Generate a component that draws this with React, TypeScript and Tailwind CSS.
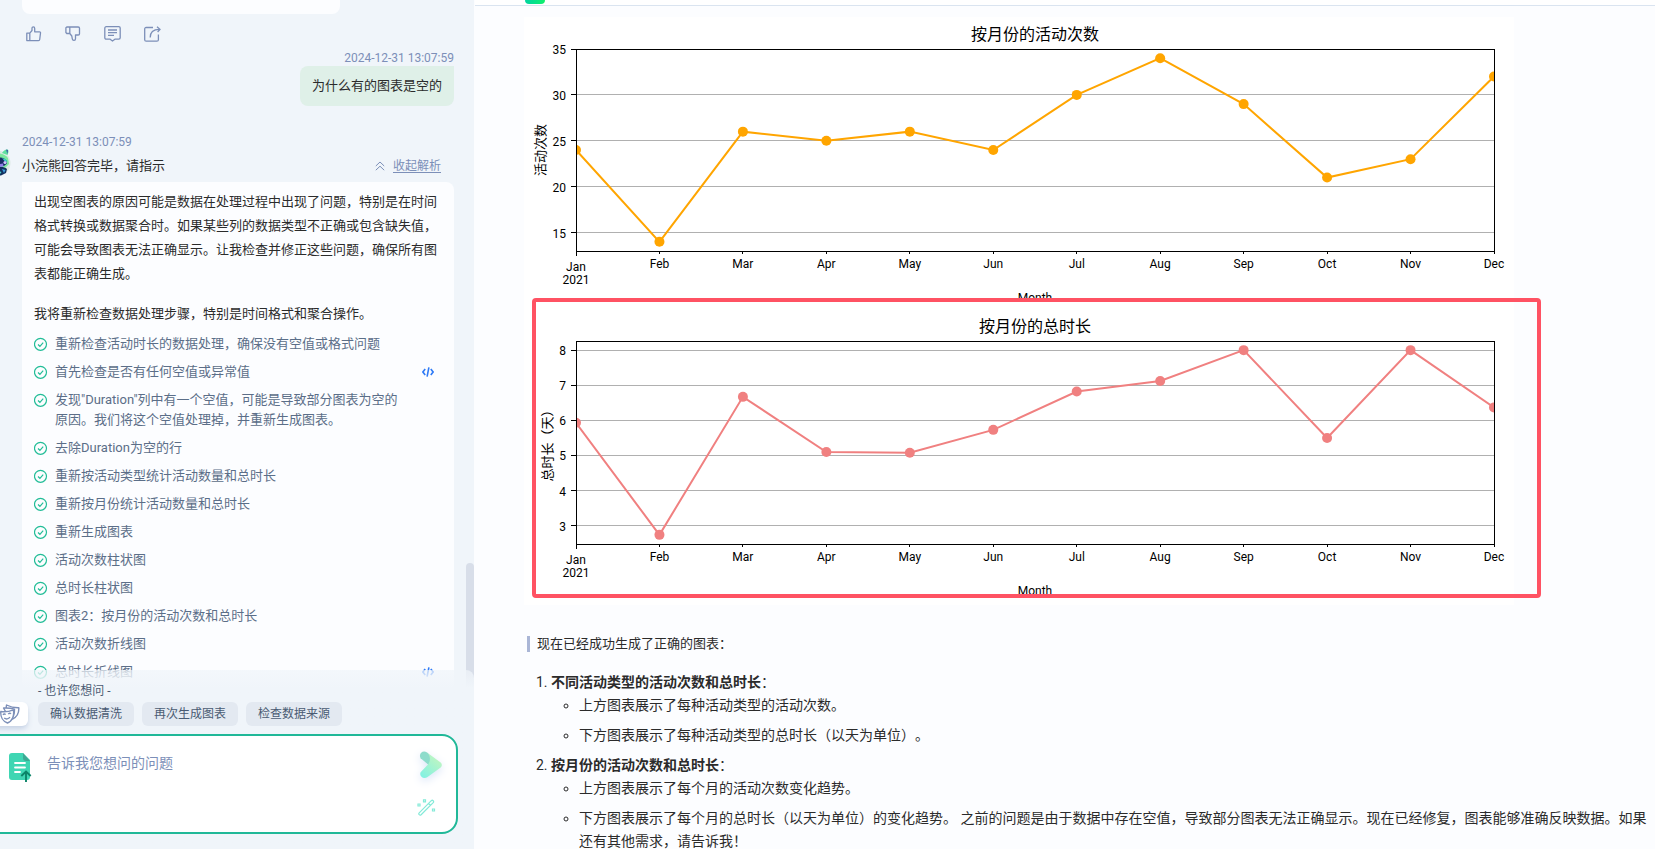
import { useState } from "react";

const sans = "font-[Roboto,'Noto_Sans_CJK_SC',sans-serif]";

const months = ['Jan', 'Feb', 'Mar', 'Apr', 'May', 'Jun', 'Jul', 'Aug', 'Sep', 'Oct', 'Nov', 'Dec'];

const steps: { text: string; code?: boolean }[] = [
    { text: '重新检查活动时长的数据处理，确保没有空值或格式问题' },
    { text: '首先检查是否有任何空值或异常值', code: true },
    { text: '发现"Duration"列中有一个空值，可能是导致部分图表为空的原因。我们将这个空值处理掉，并重新生成图表。' },
    { text: '去除Duration为空的行' },
    { text: '重新按活动类型统计活动数量和总时长' },
    { text: '重新按月份统计活动数量和总时长' },
    { text: '重新生成图表' },
    { text: '活动次数柱状图' },
    { text: '总时长柱状图' },
    { text: '图表2：按月份的活动次数和总时长' },
    { text: '活动次数折线图' },
    { text: '总时长折线图', code: true },
];

const suggestions = ['确认数据清洗', '再次生成图表', '检查数据来源'];

interface LineChartProps {
    id: string;
    title: string;
    yLabel: string;
    yLabelX: number;
    color: string;
    values: number[];
    ticks: number[];
    min: number;
    max: number;
    top: number;
    bottom: number;
}

const LEFT = 52;
const RIGHT = 970;

const LineChart: React.FC<LineChartProps> = ({ id, title, yLabel, yLabelX, color, values, ticks, min, max, top, bottom }) => {
    const x = (i: number) => LEFT + (i * (RIGHT - LEFT)) / (months.length - 1);
    const y = (v: number) => bottom - ((v - min) * (bottom - top)) / (max - min);
    const middle = (top + bottom) / 2;

    return (
        <g>
            <clipPath id={id}>
                <rect x={LEFT} y={top} width={RIGHT - LEFT} height={bottom - top} />
            </clipPath>
            <text x={(LEFT + RIGHT) / 2} y={top - 9} fontSize={16} textAnchor="middle">{title}</text>
            <text x={yLabelX} y={middle} fontSize={13} textAnchor="middle" dominantBaseline="central" transform={`rotate(-90 ${yLabelX} ${middle})`}>{yLabel}</text>
            <g shapeRendering="crispEdges">
                {ticks.map((t) => (
                    <g key={t}>
                        <line x1={LEFT} x2={RIGHT} y1={Math.floor(y(t)) + 0.5} y2={Math.floor(y(t)) + 0.5} stroke="#b0b0b0" />
                        <line x1={LEFT - 5} x2={LEFT} y1={Math.floor(y(t)) + 0.5} y2={Math.floor(y(t)) + 0.5} stroke="#000" />
                    </g>
                ))}
                {months.map((m, i) => (
                    <line key={m} x1={Math.floor(x(i)) + 0.5} x2={Math.floor(x(i)) + 0.5} y1={bottom} y2={bottom + (i === 0 ? 5 : 3)} stroke="#000" />
                ))}
            </g>
            {ticks.map((t) => (
                <text key={t} x={LEFT - 10} y={y(t) + 5} fontSize={12} textAnchor="end">{t}</text>
            ))}
            {months.map((m, i) => (
                <text key={m} x={x(i)} y={bottom + (i === 0 ? 20 : 17)} fontSize={12} textAnchor="middle">{m}</text>
            ))}
            <text x={LEFT} y={bottom + 33} fontSize={12} textAnchor="middle">2021</text>
            <text x={(LEFT + RIGHT) / 2} y={bottom + 51} fontSize={12} textAnchor="middle">Month</text>
            <g clipPath={`url(#${id})`}>
                <polyline points={values.map((v, i) => `${x(i)},${y(v)}`).join(' ')} fill="none" stroke={color} strokeWidth={2} />
                {values.map((v, i) => (
                    <circle key={i} cx={x(i)} cy={y(v)} r={5} fill={color} />
                ))}
            </g>
            <rect x={LEFT + 0.5} y={top + 0.5} width={RIGHT - LEFT} height={bottom - top} fill="none" stroke="#000" shapeRendering="crispEdges" />
        </g>
    );
}

const CheckIcon = () => (
    <svg width="14" height="20" viewBox="0 0 14 20" fill="none" stroke="#22bd97" className="shrink-0">
        <circle cx="6.500" cy="10.300" r="6" strokeWidth="1.200" />
        <path d="M4 10.500l1.900 1.800 3.300-3.600" strokeWidth="1.200" />
    </svg>
);

const CodeIcon = () => (
    <svg width="12" height="10" viewBox="0 0 12 10" fill="none" stroke="#2f7bf6" strokeWidth="1.600">
        <path d="M3.200 2L.9 5l2.300 3M8.800 2l2.300 3-2.300 3M6.900.3L5.100 9.700" />
    </svg>
);

const MessageActions = () => (
    <div className="flex gap-[23px] pl-1 pt-3 text-[#7c8fb8]">
        <button aria-label="赞">
            <svg width="16" height="16" viewBox="0 0 16 16" fill="none" stroke="currentColor" strokeWidth="1.300" strokeLinejoin="round">
                <path d="M.8 7.200h3v7.400h-3zM3.800 7.200L6 4.500V2.300C6 .4 8.700.3 8.700 2.400V5.800h4.800c.7 0 1.100.6 1 1.200l-.8 6.500c-.1.700-.6 1.100-1.200 1.100H3.800" />
            </svg>
        </button>
        <button aria-label="踩">
            <svg width="16" height="16" viewBox="0 0 16 16" fill="none" stroke="currentColor" strokeWidth="1.300" strokeLinejoin="round">
                <path d="M1.800 1h3v6.500h-3l-.9-1V1.800zM4.800 1h8.400c.8 0 1.300.5 1.300 1.200v5.500c0 .8-.5 1.300-1.300 1.300h-2.700v3.700c0 2.200-2.900 2.300-3.200.1L6.800 10 4.800 7.500" />
            </svg>
        </button>
        <button aria-label="评论">
            <svg width="17" height="16" viewBox="0 0 17 16" fill="none" stroke="currentColor" strokeWidth="1.300" strokeLinejoin="round">
                <path d="M2.200.7h12.600c.8 0 1.400.6 1.400 1.400v9.600c0 .8-.6 1.400-1.400 1.400h-3.600l-2.700 2-2.700-2H2.200c-.8 0-1.400-.6-1.400-1.400V2.100C.8 1.300 1.400.7 2.200.7zM4 4h9M4 6.700h9M4 9.400h6" />
            </svg>
        </button>
        <button aria-label="分享">
            <svg width="17" height="16" viewBox="0 0 17 16" fill="none" stroke="currentColor" strokeWidth="1.300" strokeLinejoin="round">
                <path d="M9 1.500H2.200C1.300 1.500.7 2.100.7 3v10.700c0 .9.6 1.500 1.500 1.500h10.700c.9 0 1.500-.6 1.500-1.500V8.500M6.200 11.500c0-5 2.600-8.200 9.600-8.100M13 .7l3.100 2.700L13.600 6" />
            </svg>
        </button>
    </div>
);

const Avatar = () => (
    <svg width="26" height="28" viewBox="0 0 26 28" className="-ml-[15px] shrink-0 -translate-y-1">
        <circle cx="13" cy="15" r="12.500" fill="#dde9e6" />
        <path d="M3 12C5 4 18 3 23 10l1 6-5 5H5z" fill="#7be8a0" />
        <path d="M17 5c1-2 4-4 5.500-3.500S23.500 5 22.500 7z" fill="#5fe0a0" />
        <path d="M21 1.500l2 .5-.5 4z" fill="#3c58a8" />
        <path d="M12 10.500c3-2 7-1 9.500 2l.5 3-3 2.500-5-1z" fill="#182c66" />
        <path d="M17 10l4 1.500 1.500 2.500-3-1z" fill="#3bd3cf" />
        <circle cx="20" cy="14.500" r="1.600" fill="#cfc2ff" />
        <path d="M14 16l4-.5.500 3-4 .5z" fill="#8f7ce8" />
        <path d="M12 20c3-1.500 7-1.500 10 1l-1 4-5 2.500-4-.5z" fill="#12305f" />
        <path d="M17 21l3.500 1-1.500 3z" fill="#3f9de0" />
        <path d="M14 23l2.500 1-1.500 2z" fill="#4bd8c8" />
    </svg>
);

const MaskIcon = () => (
    <svg width="20" height="20" viewBox="0 0 20 20" fill="#fff" stroke="#7c8fb8" strokeWidth="1.400" strokeLinejoin="round">
        <path d="M6.500 1c3.800 2 7.600 2.800 12.300 2.700.3 5.300-2 9.500-6.300 11.300C8 12 5.500 7 6.500 1z" />
        <path d="M3.500 4c3.500-.2 6.500-.3 11 1.200.2 5-1 8-4.500 10z" />
        <path d="M.8 7.500c4.200.5 8.500 0 12.500-1.700 1.200 5.500-.8 11.400-5.800 13.200C3 17.500.3 13 .8 7.500z" />
        <path d="M3 10.800c.7-1 1.900-1.100 2.600-.2M8.300 10.200c.6-1.100 1.900-1.300 2.700-.4M4.200 14c1.800 1.500 4.300 1.200 5.800-.8" fill="none" />
    </svg>
);

const FileIcon = () => (
    <svg width="23" height="30" viewBox="0 0 23 30" fill="none">
        <path d="M3 0h11l7 7v17a3 3 0 01-3 3H3a3 3 0 01-3-3V3a3 3 0 013-3z" fill="#3fd6b3" />
        <path d="M14 0l7 8h-4a3 3 0 01-3-3z" fill="#3fa893" />
        <path d="M6 10h10M6 14.500h10M6 19h5" stroke="#fff" strokeWidth="1.800" strokeLinecap="round" />
        <path d="M17 29V19M12.300 23l4.700-4.500 4.700 4.500" stroke="#0c8468" strokeWidth="1.900" />
    </svg>
);

const SendIcon = () => (
    <svg width="24" height="28" viewBox="0 0 24 28" fill="none" className="drop-shadow-[0_3px_4px_#dbe6f8]">
        <defs>
            <linearGradient id="send" x1="3" y1="26" x2="18" y2="9" gradientUnits="userSpaceOnUse">
                <stop stopColor="#82f1e2" />
                <stop offset="1" stopColor="#b8f5c5" />
            </linearGradient>
        </defs>
        <path d="M8 1.500l13.300 9.700c2 1.500 2 4.100 0 5.600L8.200 26.200C4.500 28.500-.200 25.300 1.600 21.300L9 13.500 5 5z" fill="url(#send)" />
        <path d="M1.600 7.200C-.800 2.500 4-1.200 8 1.500c3.200 2.500 4 7.500 1.200 12z" fill="#8ddccb" />
    </svg>
);

const WandIcon = () => (
    <svg width="19" height="17" viewBox="0 0 19 17" fill="none" stroke="#84ead8" strokeWidth="1.200">
        <path d="M2.200 13.800L14.300 1.700c1.300-1.200 3.100.6 1.900 1.900L4.100 15.700c-1.300 1.200-3.100-.6-1.900-1.900zM11.500 4.500l1.900 1.900" />
        <path d="M6.500.8h2v2h-2zM1 5h2v2H1zM15.500 10h2v2h-2z" />
    </svg>
);

const ChatPanel = () => {
    const [open, setOpen] = useState(true);
    const [question, setQuestion] = useState('');

    return (
        <aside className="relative h-full w-[474px] shrink-0 overflow-hidden bg-[#f0f5fa]">
            <div className="flex flex-col pl-[22px] pr-5">
                <div className="h-3.5 w-[318px] rounded-b-lg bg-[#fcfdff]" />
                <MessageActions />

                <div className="mt-2 flex flex-col items-end">
                    <time className="text-xs leading-4 text-[#7c8fb8]">2024-12-31 13:07:59</time>
                    <div className="rounded-lg rounded-tr-none bg-[#dff0e8] px-3 py-2.5 text-[13px] leading-5 text-[#2b2b2b]">为什么有的图表是空的</div>
                </div>

                <time className="mt-7 text-xs leading-4 text-[#7c8fb8]">2024-12-31 13:07:59</time>
                <div className="-ml-[22px] flex h-8 items-center pr-[13px]">
                    <Avatar />
                    <span className="ml-[11px] flex-1 text-[13px] text-[#2b2b2b]">小浣熊回答完毕，请指示</span>
                    <button className="flex items-center gap-2 text-xs text-[#7c8fb8]" onClick={() => setOpen(!open)}>
                        <svg width="10" height="10" viewBox="0 0 10 10" fill="none" stroke="currentColor">
                            <path d="M.8 5L5 1l4.200 4M.8 9.200L5 5.200l4.200 4" />
                        </svg>
                        <span className="underline underline-offset-2">收起解析</span>
                    </button>
                </div>

                {open && (
                    <div className="rounded-lg rounded-tl-none bg-[#fcfdff] px-3 py-2 text-[13px]">
                        <p className="mb-4 leading-6 text-[#2b2b2b]">
                            出现空图表的原因可能是数据在处理过程中出现了问题，特别是在时间格式转换或数据聚合时。如果某些列的数据类型不正确或包含缺失值，可能会导致图表无法正确显示。让我检查并修正这些问题，确保所有图表都能正确生成。
                        </p>
                        <p className="mb-2 leading-6 text-[#2b2b2b]">我将重新检查数据处理步骤，特别是时间格式和聚合操作。</p>
                        <ul className="flex flex-col gap-2 leading-5 text-[#5b6e88]">
                            {steps.map((step) => (
                                <li key={step.text} className="flex gap-[7px] pr-2">
                                    <CheckIcon />
                                    <span className="max-w-[350px] flex-1">{step.text}</span>
                                    {step.code && (
                                        <button className="ml-auto" aria-label="查看代码">
                                            <CodeIcon />
                                        </button>
                                    )}
                                </li>
                            ))}
                        </ul>
                    </div>
                )}
            </div>

            {/* Scrollbar thumb */}
            <div className="absolute bottom-0 right-0 h-[286px] w-2 rounded-t bg-[#d8dee9]" />

            {/* Input area */}
            <div className="absolute inset-x-0 bottom-0 rounded-tr-lg bg-linear-to-b from-[#f0f5fa]/70 to-[#f0f5fa] to-[18px] pb-[15px] pr-4 pt-3">
                <div className="pl-[38px] text-xs leading-[18px] text-[#4a5b73]">- 也许您想问 -</div>
                <div className="mt-0.5 flex items-center">
                    <button className="-ml-2 mr-2.5 flex h-6 w-9 items-center justify-end rounded-md bg-white pr-2 shadow-md shadow-[#c9d4e6]" aria-label="角色">
                        <MaskIcon />
                    </button>
                    <div className="flex gap-2">
                        {suggestions.map((s) => (
                            <button key={s} className="h-6 rounded-md bg-[#e3e9f1] px-3 text-xs text-[#4a5b73]">{s}</button>
                        ))}
                    </div>
                </div>
                <div className="-ml-4 mt-2 flex h-[100px] rounded-2xl border-2 border-[#20b898] bg-white pb-4 pl-[23px] pr-3 pt-[15px]">
                    <button className="self-start pt-0.5" aria-label="上传文件">
                        <FileIcon />
                    </button>
                    <textarea
                        className="ml-[15px] flex-1 resize-none pt-0.5 text-sm leading-5 outline-none placeholder:text-[#7c8fb8]"
                        aria-label="问题"
                        placeholder="告诉我您想问的问题"
                        value={question}
                        onChange={(e) => setQuestion(e.target.value)}
                    />
                    <div className="flex flex-col items-center justify-between">
                        <button aria-label="发送"><SendIcon /></button>
                        <button className="mr-2" aria-label="润色"><WandIcon /></button>
                    </div>
                </div>
            </div>
        </aside>
    );
}

const ResultPanel = () => (
    <main className="flex h-full min-w-0 flex-1 flex-col overflow-hidden bg-[#fcfdff]">
        <div className="ml-px h-1.5 shrink-0 border-b border-[#dae4f0] bg-white pl-[50px]">
            <div className="h-1 w-5 rounded-b bg-linear-to-r from-[#05d3a0] to-[#12f06a]" />
        </div>

        <div className="pl-[50px] pr-1 pt-[11px] text-[#2b2b2b] [text-spacing-trim:space-all]">
            <figure className="relative">
                <svg width="990" height="588" viewBox="0 0 990 588" className="bg-white" fill="#000">
                    <LineChart
                        id="count"
                        title="按月份的活动次数"
                        yLabel="活动次数"
                        yLabelX={16}
                        color="#ffa500"
                        values={[24, 14, 26, 25, 26, 24, 30, 34, 29, 21, 23, 32]}
                        ticks={[15, 20, 25, 30, 35]}
                        min={13}
                        max={35}
                        top={32}
                        bottom={234}
                    />
                    <LineChart
                        id="duration"
                        title="按月份的总时长"
                        yLabel="总时长（天）"
                        yLabelX={23}
                        color="#f08080"
                        values={[5.93, 2.74, 6.67, 5.1, 5.08, 5.73, 6.82, 7.12, 8, 5.5, 8, 6.37]}
                        ticks={[3, 4, 5, 6, 7, 8]}
                        min={2.48}
                        max={8.26}
                        top={324}
                        bottom={527}
                    />
                </svg>
                {/* Highlight around the fixed chart */}
                <div className="absolute left-2 top-[281px] h-[300px] w-[1009px] rounded border-4 border-[#ff5263]" />
            </figure>

            <blockquote className="mt-[31px] ml-[3px] border-l-[3px] border-[#aab6d6] pl-[7px] text-[13px] leading-4">现在已经成功生成了正确的图表：</blockquote>

            <ol className="mt-[19px] pl-3 text-sm leading-[23px]">
                <li>
                    1. <strong className="font-bold">不同活动类型的活动次数和总时长</strong>：
                    <ul className="list-[circle] pl-[43px]">
                        <li>上方图表展示了每种活动类型的活动次数。</li>
                        <li className="mt-[7px]">下方图表展示了每种活动类型的总时长（以天为单位）。</li>
                    </ul>
                </li>
                <li className="mt-[7px]">
                    2. <strong className="font-bold">按月份的活动次数和总时长</strong>：
                    <ul className="list-[circle] pl-[43px]">
                        <li>上方图表展示了每个月的活动次数变化趋势。</li>
                        <li className="mt-[7px]">下方图表展示了每个月的总时长（以天为单位）的变化趋势。 之前的问题是由于数据中存在空值，导致部分图表无法正确显示。现在已经修复，图表能够准确反映数据。如果还有其他需求，请告诉我！</li>
                    </ul>
                </li>
            </ol>
        </div>
    </main>
);

export default function App() {
    return (
        <div className={`flex h-screen overflow-hidden ${sans}`}>
            <ChatPanel />
            <ResultPanel />
        </div>
    );
}
